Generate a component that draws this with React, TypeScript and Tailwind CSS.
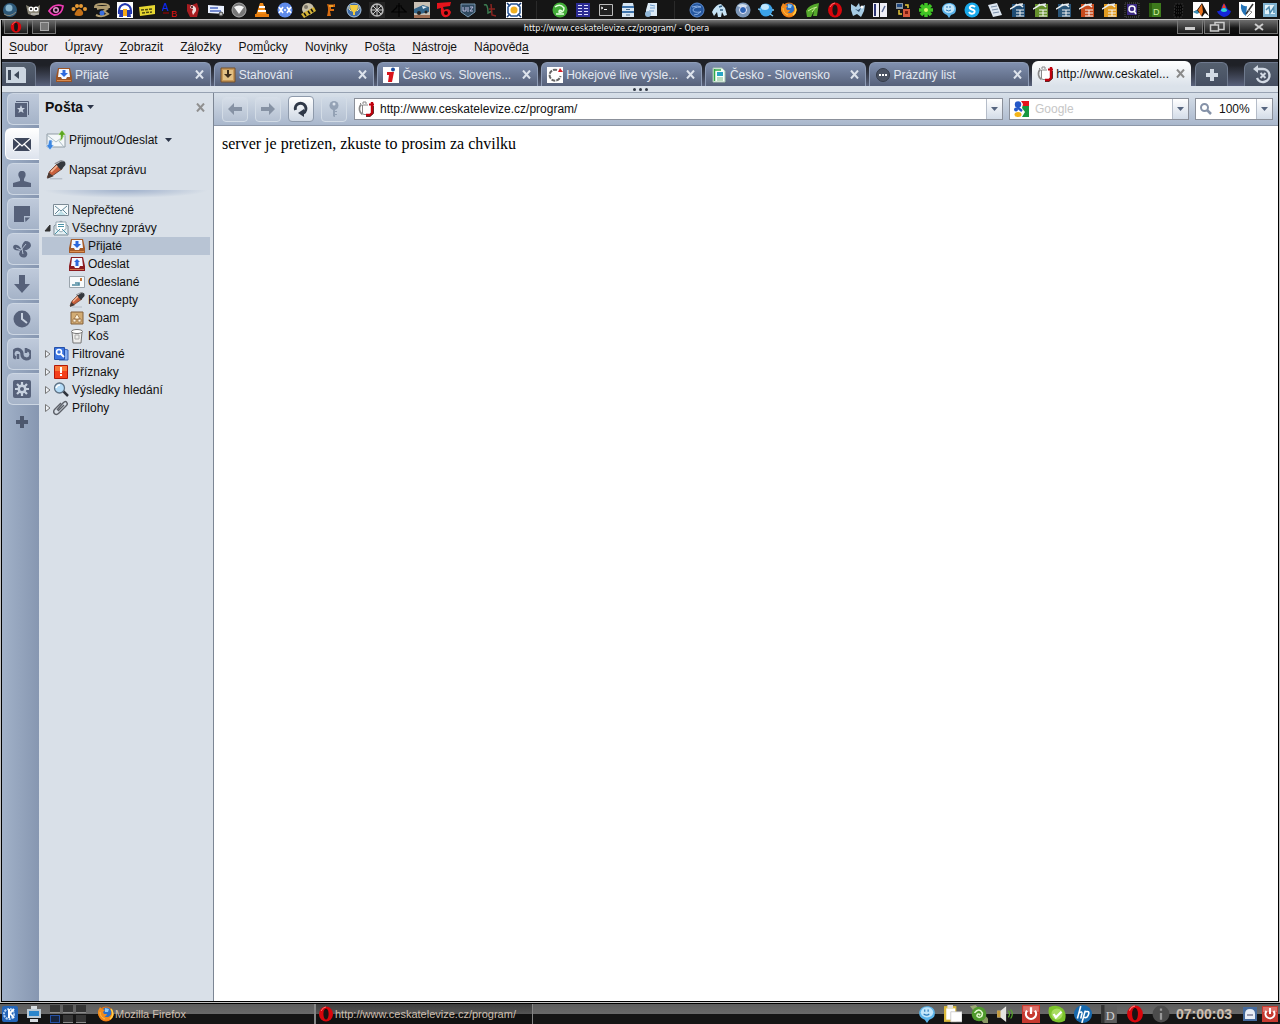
import React from 'react';

type IconProps = { children: React.ReactNode; size?: string; box?: string };

const Icon = ({ children, size = 'size-4', box = '0 0 16 16' }: IconProps) => (
  <svg className={`${size} shrink-0`} viewBox={box} fill="none" aria-hidden="true">
    {children}
  </svg>
);

/* ── Shared drawings ── */

const OperaO = () => (
  <>
    <ellipse cx="8" cy="8" rx="7" ry="7.5" fill="#d8060c" />
    <ellipse cx="8" cy="8" rx="2.6" ry="5.6" fill="#1a1414" />
    <path d="M3 5Q5 1 8 1" stroke="#ff7070" strokeWidth="1" />
  </>
);

const Firefox = () => (
  <>
    <circle cx="8" cy="8" r="7.5" fill="#e8720c" />
    <circle cx="8.5" cy="6.5" r="5" fill="#2b6fc4" />
    <path d="M7 2l4 1-1 3-3 0z" fill="#8cc8f4" />
    <path d="M0 5l2-4 2 2 3 1-2 2 1 2 3 0q-1 3-3 2 4 3 7-1l1-4 0-2q3 5 0 9-4 4-9 2-6-3-5-9z" fill="#f08a1c" />
    <path d="M13 3q4 6-1 10" stroke="#ffd24a" strokeWidth="1.4" />
    <path d="M2 6q0 5 5 7" stroke="#ffc040" strokeWidth="1" />
  </>
);

const Bubble = () => (
  <>
    <path d="M8 1c4 0 7 2 7 6s-2 5-5 6l-2 3-2-3c-3-1-5-3-5-6s3-6 7-6z" fill="#5cb4ea" />
    <ellipse cx="8" cy="6.5" rx="5.5" ry="4.5" fill="#c2e6fa" />
    <path d="M6 4v2M9 4v2M5 8q3 2 5 0" stroke="#2878b8" />
  </>
);

const Chameleon = () => (
  <>
    <path d="M0 1l5-1 11 12v4h-4z" fill="#a8b878" opacity=".8" />
    <circle cx="8" cy="8" r="6.5" fill="#4f9a2c" />
    <path d="M4 7q4-5 7 0 0 4-3 4-3-1-1-3 3 0 1 1" stroke="#e4f8d0" strokeWidth="1.4" />
  </>
);

const PowerRed = () => (
  <>
    <path d="M0 0h16v16H0z" fill="#c63a30" />
    <path d="M1 1h14v5H1z" fill="#dc7068" />
    <path d="M4.500 5a4.500 4.500 0 1 0 7 0M8 2v6" stroke="#fff" strokeWidth="2" />
  </>
);

const TvMark = () => (
  <>
    <path d="M4 4h9v9H5z" fill="#fff" />
    <path d="M10 4H4.500v8l1 1.500H8" stroke="#888" />
    <path d="M3.500 3.500Q1 5 1.500 9q.5 3 3 4.500" stroke="#888" strokeWidth="1.600" />
    <path d="M3 3l-1-1M5 3V1h3v2" stroke="#888" />
    <path d="M8 14h4l2-2V1" stroke="#c0000c" strokeWidth="2.400" />
    <path d="M11 3.500h5" stroke="#c0000c" strokeWidth="2" />
    <path d="M8 15.500h4l3.500-3V5" stroke="#400" strokeWidth=".8" />
  </>
);

const Tray = ({ frame, up }: { frame: string; up?: boolean }) => (
  <>
    <path d="M2 1h12l2 9v5H0v-5z" fill={frame} />
    <path d="M3 2h10l1 8h-3l-1 2H6l-1-2H2z" fill="#f4f8ff" />
    <path d={up ? 'M8 3l3 3H9.500v4h-3V6H5z' : 'M6.500 3h3v3H12L8 10 4 6h2.500z'} fill="#2c68dc" />
    <path d="M1 13.500h14" stroke="#ffb070" opacity=".6" />
  </>
);

const Crate = () => (
  <>
    <path d="M1 1h14v14H1z" fill="#c99a58" stroke="#76512a" />
    <path d="M3 3h10v10H3z" fill="#e2c084" />
    <path d="M7 3h2v4h3l-4 4-4-4h3z" fill="#3c2c1c" />
  </>
);

const Pen = () => (
  <>
    <path d="M3 15h10" stroke="#b4bcc6" />
    <path d="M1 14l2-5 6-6 4 4-7 5z" fill="#c9603c" stroke="#5a3020" strokeWidth=".6" />
    <path d="M8 4l4-3q4-1 3.500 3L12 8z" fill="#34383e" />
    <path d="M7 3l5-2.500 2 .5" stroke="#8c9096" />
    <path d="M1 15l1-5 4 3z" fill="#4a3a34" />
    <path d="M4 9.500l5-5" stroke="#f4b898" strokeWidth="1.300" />
  </>
);

const Office = ({ color }: { color: string }) => (
  <>
    <path d="M2 2h13v13H2z" fill={color} />
    <path d="M0 7q5-2 7-5M3 5q5-3 10-3M8 3q2-1 5 2" stroke="#e9edf0" strokeWidth="1.400" />
    <path d="M6 8h8M6 11h8M6 14h8M10 8v6" stroke="#f4f4f4" />
  </>
);

const Letter = () => (
  <>
    <path d="M.5 2.500h15v11H.5z" fill="#f5f9fb" stroke="#7c8b96" />
    <path d="M3 13l5-4 5 4z" fill="#bfe0e8" />
    <path d="M2 4l6 5 6-5M2 12l4-4M14 12l-4-4" stroke="#63889a" />
  </>
);

/* ── Launcher panel ── */

const LAUNCHERS: (React.ReactNode | null)[] = [
  <><circle cx="8" cy="8" r="7" fill="#2d5878" /><circle cx="7" cy="6" r="3.500" fill="#88b4cc" /><path d="M2 12q6 4 12-2" stroke="#8a8a80" /></>,
  <><path d="M1 3l4 2h7l3-2-1 9-5 2-6-2z" fill="#8b8778" /><circle cx="6" cy="7" r="2.500" fill="#fff" /><circle cx="11" cy="7" r="2.500" fill="#fff" /><circle cx="6" cy="7" r="1" fill="#000" /><circle cx="11" cy="7" r="1" fill="#000" /><path d="M6 12h8" stroke="#ddd" /></>,
  <><path d="M1 9q5-8 14-5-1 9-9 9-3-1-5-4z" fill="#1c0414" stroke="#f03cb4" strokeWidth="1.800" /><circle cx="8" cy="8" r="3" fill="#e494d0" /><circle cx="8" cy="8" r="1.500" fill="#111" /></>,
  <><path d="M4 11q4-8 8-1 1 4-4 4-6 0-4-3z" fill="#c47018" /><circle cx="2.500" cy="7" r="2" fill="#e89a34" /><circle cx="6" cy="4" r="2" fill="#e89a34" /><circle cx="10" cy="4" r="2" fill="#e89a34" /><circle cx="14" cy="7" r="2" fill="#e89a34" /></>,
  <><path d="M1 5q0-3 7-3t7 3H1zM3 7q5-2 10 0l-3 2 4 3q-6 4-12 1" stroke="#b09c70" strokeWidth="2" /><circle cx="8" cy="11" r="2.500" fill="#3c70e0" /></>,
  <><path d="M0 0h16v16H0z" fill="#fff" /><path d="M2 12q-1-9 6-10 7 1 6 10" stroke="#2438b0" strokeWidth="2" /><path d="M3 8h3v7H2zM10 8h3l1 7h-4z" fill="#2438b0" /><path d="M6 7h4v7H6z" fill="#f6a818" /></>,
  <><path d="M0 5l16-2v9L1 14z" fill="#e6d630" /><path d="M2 8l12-1M3 11l10-1" stroke="#4c4810" strokeWidth="1.500" strokeDasharray="3 1" /></>,
  <><text x="0" y="9" fontSize="10" fontFamily="Liberation Sans" fill="#0b2cff">A</text><text x="9" y="15" fontSize="9" fontFamily="Liberation Sans" fill="#e01010">B</text><path d="M1 11h6" stroke="#a00" /></>,
  <><path d="M2 2l5 1 5-2 2 6-2 8H5L2 9z" fill="#a81c20" /><path d="M6 3q6 1 5 6l-3 4-1-3 1-3-3-1z" fill="#f0dede" /><circle cx="7" cy="5" r="1" fill="#300" /></>,
  <><path d="M0 3l16 1v8L0 11z" fill="#eaf1ff" /><path d="M2 6h8M2 9h11" stroke="#4e68c0" strokeWidth="1.500" /><circle cx="13" cy="12" r="2" fill="#bbb" stroke="#444" /></>,
  <><circle cx="8" cy="8" r="7" fill="#777" stroke="#aaa" /><path d="M3 5q5-3 10 0l-5 7z" fill="#f4f4f4" /></>,
  <><path d="M6 1h3l4 12H2z" fill="#ee8a18" /><path d="M5 5h6M4 9h8" stroke="#fff" strokeWidth="1.800" /><path d="M1 12h14v3H1z" fill="#e67c0c" /></>,
  <><circle cx="8" cy="8" r="7.500" fill="#5f8bea" /><path d="M2 5l4 6M6 5l-4 6M7 8h2M14 5l-4 6M10 5l4 6" stroke="#fff" strokeWidth="1.600" /></>,
  <><circle cx="8" cy="7" r="6" fill="#c8c0a8" /><circle cx="6" cy="5" r="2" fill="#7c7668" /><path d="M1 12l13-7 2 4-12 7z" fill="#d6b434" /><path d="M4 11l2 3M8 9l2 3M11 7l2 3" stroke="#111" strokeWidth="1.500" /></>,
  <><path d="M4 14Q6 7 4 2q5 1 8 0v3H8v2h3v2H7l1 5z" fill="#d86c10" /><path d="M6 4h4" stroke="#ffd040" /></>,
  <><circle cx="8" cy="8" r="7" fill="#416da8" stroke="#a8c4e0" /><path d="M4 3h8q0 6-3 7v3H7v-3Q4 9 4 3z" fill="#f4cd40" /><path d="M3 4v3l2 2M13 4v3l-2 2" stroke="#f0e0a0" /></>,
  <><path d="M0 0h16v16H0z" fill="#242424" /><circle cx="8" cy="8" r="6" stroke="#b6b6b6" strokeWidth="1.500" /><path d="M8 2v12M2 8h12M4 4l8 8M12 4l-8 8" stroke="#ccc" /></>,
  <><path d="M8 1v14M5 4h6M1 10l5-5M15 10l-5-5M0 10h16" stroke="#020202" strokeWidth="1.200" /></>,
  <><path d="M0 0h16v16H0z" fill="#c8c0b4" /><path d="M0 7l9-4 6 2v5l-9 2-6-1z" fill="#33658a" /><path d="M8 4l5 1-4 2z" fill="#e4f0f8" /><circle cx="5" cy="11" r="2" fill="#222" /><circle cx="12" cy="10" r="1.500" fill="#222" /><path d="M0 13h16v3H0z" fill="#9a6a50" /></>,
  <><path d="M0 1l14-1-1 4-7 1 1 3q5-3 7 2-1 6-7 5-4-2-3-9L0 7z" fill="#e5141c" /><circle cx="9" cy="11" r="2" fill="#1a0000" /></>,
  <><path d="M1 2h14v8l-7 5-7-5z" fill="#304a60" stroke="#7898b0" /><path d="M3 5v4h3V5M8 5v5M10 5h3l-3 4h3" stroke="#bbd" /></>,
  <><path d="M1 3q4-2 4 8l4-2" stroke="#3c7a50" strokeWidth="1.500" /><path d="M8 2l1 11 4 1M6 7h6" stroke="#8a2420" strokeWidth="1.500" /></>,
  <><path d="M0 0h16v16H0z" fill="#fff" /><path d="M1 1l3 3M15 1l-3 3M1 15l3-3M15 15l-3-3" stroke="#173a74" strokeWidth="1.500" /><path d="M5 2h6l3 3v6l-3 3H5l-3-3V5z" stroke="#265494" strokeWidth="1.500" /><circle cx="8" cy="8" r="3.500" fill="#f0b020" /></>,
  null,
  <><circle cx="8" cy="8" r="7.500" fill="#42ac38" /><path d="M3 5q5-4 9 1 0 5-5 4 0-3 3-1M4 12h8" stroke="#e4ffe0" strokeWidth="1.500" /></>,
  <><path d="M1 1h14v14H1z" fill="#2c2c94" /><path d="M3 3.500h4M9 3.500h4M3 6.500h4M9 6.500h4M3 9.500h4M9 9.500h4M3 12.500h4M9 12.500h4" stroke="#e0e0ff" /></>,
  <><path d="M1.500 2.500h13v11h-13z" fill="#222" stroke="#bbb" /><path d="M3 5l2 1-2 1M6 7.500h3" stroke="#eee" /></>,
  <><path d="M3 1h10l1 4v10H2V5z" fill="#d7e6f4" /><path d="M2 5h12M2 10h12" stroke="#3f74ac" strokeWidth="1.800" /><path d="M6 7.500h4M6 13h4" stroke="#4a6888" /></>,
  <><path d="M5 1h9v13H3V8z" fill="#dceaf6" /><path d="M7 3l5 1M7 6h5M6 9h5" stroke="#6f9ccc" /><circle cx="5" cy="12" r="3" fill="#91b7d8" /></>,
  null,
  <><circle cx="8" cy="8" r="7" fill="#2658a0" stroke="#5a8ad0" /><path d="M3 5q6-2 9 0-8 0-8 3t8 2M5 13q5 0 7-4" stroke="#88aee4" /></>,
  <><path d="M0 10q4-8 9-8l4 4 2 7-3 1-2-4-1 5H6l-1-5-3 4z" fill="#c6e2f4" /><path d="M7 5l3-1M8 8l3 0" stroke="#2f5c80" strokeWidth="1.500" /></>,
  <><circle cx="8" cy="8" r="7.500" fill="#7b96b8" /><path d="M2 4q5-4 11 0L8 6z" fill="#d0deec" /><circle cx="8" cy="8" r="3.500" fill="#2c62b4" stroke="#eef" /></>,
  <><circle cx="8" cy="8" r="6.500" fill="#3ba2e8" /><ellipse cx="7" cy="5" rx="4" ry="3" fill="#c0e8ff" /><path d="M0 7l3 1M12 12l3 2M14 8h2" stroke="#79c6f4" strokeWidth="1.500" /></>,
  <Firefox />,
  <><path d="M2 9Q4 3 15 1l-2 13H9l1-5-3 6H3z" fill="#55a82c" /><path d="M4 9q4-3 9-4M8 10l4-5" stroke="#c8f090" /></>,
  <OperaO />,
  <><path d="M1 2l5 3 3-4 1 4 5-2-1 6-3 6-4-3-4 2-2-6z" fill="#a7cce4" /><path d="M5 7l3 1 3-2-2 4z" fill="#2a4a6a" /><circle cx="12" cy="5" r="1.500" fill="#fff" /></>,
  <><path d="M1 1h6v14H1zM8 1h7v14H8z" fill="#eeeef6" /><path d="M3 2v12" stroke="#2c3474" strokeWidth="2" /><path d="M10 10l3-6" stroke="#5a6a94" strokeWidth="1.500" /></>,
  <><path d="M1 1h7v6H1z" fill="#8a99a8" /><path d="M2 2h5v3H2z" fill="#204880" /><path d="M8 7h7v8H8z" fill="#d5583c" /><path d="M10 9h3v3h-3z" fill="#7a1c10" /><path d="M4 8v4h3M10 3h3v3" stroke="#e8c838" strokeWidth="1.500" /></>,
  <><path d="M8 1v14M1 8h14M3 3l10 10M13 3L3 13" stroke="#3fc424" strokeWidth="3.500" /><circle cx="8" cy="8" r="2" fill="#d8f870" /></>,
  <Bubble />,
  <><circle cx="8" cy="8" r="7.500" fill="#19a9ea" /><path d="M11 5q-2-2-4-1-3 2 1 3.500 4 1 2 3.500-3 2-5-1" stroke="#fff" strokeWidth="2" /></>,
  <><path d="M1 3l9-2 5 12-9 2z" fill="#dde6f0" /><path d="M4 5l6-1M5 8l6-1M6 11l6-1" stroke="#7a8ea8" /></>,
  <Office color="#1f4c74" />,
  <Office color="#65902c" />,
  <Office color="#2a5578" />,
  <Office color="#c84a1c" />,
  <Office color="#e09a20" />,
  <><path d="M1 1h14v14H1z" stroke="#555" strokeDasharray="1 1" /><path d="M3 2h10v11H3z" fill="#3c2a84" /><circle cx="8" cy="7" r="3" stroke="#fff" strokeWidth="1.500" /><path d="M10 9l2 3" stroke="#fff" strokeWidth="1.500" /></>,
  <><path d="M2 1h12v14H2z" fill="#3d7a1c" /><path d="M2 1h3v14H2z" fill="#2b5c10" /><text x="6" y="13" fontSize="9" fontFamily="Liberation Sans" fill="#d0f0a0">D</text></>,
  <><path d="M5 2h8l-1 13H4z" fill="#050505" stroke="#333" strokeDasharray="2 1" /><path d="M6 5h5M6 8h5M6 11h5" stroke="#3c3c3c" strokeDasharray="1 1" /></>,
  <><path d="M0 0h16v16H0z" fill="#fff" /><path d="M0 10l4-2 5-7 7 13-4-3-3 4-2-4z" fill="#17100c" /><path d="M5 8l4-6 1 8-2 4z" fill="#e8701c" /><path d="M0 10l4-2 2 3-2 1z" fill="#3c90b8" /></>,
  <><path d="M1 9q4 1 5-5 2-4 4 0 1 4 5 5-1 5-7 6-6-2-7-6z" fill="#1424d8" /><path d="M6 6l2-5 2 5z" fill="#f03c20" /><path d="M5 9q0-3 3-3t3 3q-3 2-6 0z" fill="#32d4d0" /></>,
  <><path d="M0 0h16v16H0z" fill="#fff" /><path d="M2 2q4 3 6 2l-1 10Q1 10 2 2z" fill="#2474b8" /><path d="M7 12l7-10" stroke="#333" strokeWidth="1.500" /><path d="M9 8l4 2-5 5" stroke="#888" /></>,
  <><path d="M1 1h14v14H1z" fill="#7fb2d0" /><path d="M3 3h10v9H3z" fill="#e3f3fa" /><path d="M4 8l3-3 1 6 4-6v6" stroke="#4a88ac" strokeWidth="1.500" /></>,
];

const LauncherPanel = () => (
  <div className="flex h-[19px] items-center justify-between bg-[#151515] px-0.5">
    {LAUNCHERS.map((icon, i) =>
      icon ? (
        <button key={i} aria-label={`Launcher ${i + 1}`} className="flex w-4 justify-center">
          <Icon>{icon}</Icon>
        </button>
      ) : (
        <span key={i} className="flex w-4 justify-center"><span className="h-[18px] w-px bg-[#2a2a2a]" /></span>
      )
    )}
  </div>
);

/* ── Window chrome ── */

const TITLE_BTN = 'flex h-[14px] items-center justify-center border border-t-0 border-[#777] bg-linear-to-b from-[#6d6d6d] to-[#1c1c1c]';

const TitleBar = () => (
  <div className="flex h-4 items-start bg-linear-to-b from-[#777] via-[#111] via-50% to-[#090909]">
    <div className="flex gap-1 pl-0.5">
      <button aria-label="Window menu" className={`${TITLE_BTN} w-6`}><Icon size="size-3"><OperaO /></Icon></button>
      <button aria-label="Pin" className={`${TITLE_BTN} w-6`}>
        <span className="size-[9px] border border-[#aaa] bg-[#777]" />
      </button>
    </div>
    <span className="flex-1 text-center text-[9px] leading-4 text-[#f2f2f2] [font-family:'DejaVu_Sans_Condensed','DejaVu_Sans',sans-serif]">
      http://www.ceskatelevize.cz/program/ - Opera
    </span>
    <div className="flex gap-px">
      <button aria-label="Minimize" className={`${TITLE_BTN} w-[26px]`}><span className="mt-1 h-[3px] w-2.5 bg-[#ccc]" /></button>
      <button aria-label="Restore" className={`${TITLE_BTN} w-[26px]`}>
        <Icon size="h-3 w-4" box="0 0 16 12">
          <path d="M6 1.500h9v7H6z" stroke="#ccc" strokeWidth="1.500" />
          <path d="M1.500 4h8v6h-8z" fill="#444" stroke="#ccc" strokeWidth="1.500" />
        </Icon>
      </button>
      <button aria-label="Close" className={`${TITLE_BTN} ml-2 w-[39px]`}>
        <Icon size="h-2 w-3" box="0 0 12 8"><path d="M2 1l8 6M10 1L2 7" stroke="#ccc" strokeWidth="2" /></Icon>
      </button>
    </div>
  </div>
);

const MENU = [
  ['', 'S', 'oubor'],
  ['Úp', 'r', 'avy'],
  ['', 'Z', 'obrazit'],
  ['Z', 'á', 'ložky'],
  ['Po', 'm', 'ůcky'],
  ['Nov', 'i', 'nky'],
  ['Poš', 't', 'a'],
  ['', 'N', 'ástroje'],
  ['Nápověd', 'a', ''],
];

const MenuBar = () => (
  <nav className="flex h-[23px] items-center gap-[17px] bg-[#efebef] px-[7px] pb-0.5 text-xs text-[#111]">
    {MENU.map(([before, key, after]) => (
      <button key={before + key + after}>{before}<u className="underline-offset-2">{key}</u>{after}</button>
    ))}
  </nav>
);

const TABS = [
  { title: 'Přijaté', icon: <Tray frame="#9c5424" /> },
  { title: 'Stahování', icon: <Crate /> },
  {
    title: 'Česko vs. Slovens...',
    icon: <><path d="M0 0h16v16H0z" fill="#fff" /><path d="M4 5h7L9 15H5l1-7H4z" fill="#d8141c" /><circle cx="10" cy="2.500" r="2" fill="#1c4c9c" /></>,
  },
  {
    title: 'Hokejové live výsle...',
    icon: <><path d="M0 0h16v16H0z" fill="#fff" /><path d="M10 3a5.500 5.500 0 1 0 3.500 6" stroke="#666" strokeWidth="2" strokeDasharray="4 1" /><path d="M13 1l3 4h-5z" fill="#d42028" /></>,
  },
  {
    title: 'Česko - Slovensko',
    icon: <><path d="M2 1h9l3 3v11H2z" fill="#f8fff8" stroke="#a4c4b0" /><path d="M3.500 2v12M4 3h6" stroke="#30a848" strokeWidth="1.500" /><path d="M6 5h6v4H6z" fill="#28a4c4" /><path d="M6 11h6M6 13h6" stroke="#78b888" /></>,
  },
  {
    title: 'Prázdný list',
    icon: <><circle cx="8" cy="8" r="6.500" fill="#4a5262" stroke="#353c4a" /><path d="M4 7h2v2H4zM7 7h2v2H7zM10 7h2v2h-2z" fill="#fff" /></>,
  },
];

const CloseX = ({ color }: { color: string }) => (
  <Icon size="size-[9px]" box="0 0 9 9"><path d="M1 .5l7 8M8 .5l-7 8" stroke={color} strokeWidth="2" /></Icon>
);

const SIDE_TAB = 'flex items-center justify-center rounded-t-md border border-b-0 border-[#6f7a8e] bg-linear-to-b from-[#55606f] to-[#454e61]';

const TabBar = () => (
  <div className="flex h-[26px] items-end bg-linear-to-b from-[#1f2127] from-20% to-[#59627c]">
    <button aria-label="Panels" className={`${SIDE_TAB} mr-3.5 h-6 w-[34px] justify-start rounded-tl-none border-l-0 pl-1`}>
      <Icon size="h-4 w-5" box="0 0 20 16">
        <path d="M0 0h18l2 2v14H0z" fill="#cbd5e0" />
        <path d="M2 3h3v10H2z" fill="#3c4758" /><path d="M13 4v8L8 8z" fill="#3c4758" />
      </Icon>
    </button>
    <div role="tablist" className="flex min-w-0 flex-1 items-end gap-[3px]">
      {TABS.map((tab) => (
        <div key={tab.title} className="flex h-6 min-w-0 flex-1 items-center rounded-t-md border border-b-0 border-[#8e9cb6] bg-linear-to-b from-[#8090af] to-[#56617a] pr-1.5 pl-[5px]">
          <button role="tab" className="flex min-w-0 flex-1 items-center gap-[3px] text-left text-xs whitespace-nowrap text-[#e4e9f1]">
            <Icon>{tab.icon}</Icon>{tab.title}
          </button>
          <button aria-label={`Zavřít ${tab.title}`}><CloseX color="#dde3ec" /></button>
        </div>
      ))}
      <div className="flex h-[25px] min-w-0 flex-1 items-center rounded-t-md bg-linear-to-b from-white to-[#dbe2ea] pr-1.5 pl-[5px]">
        <button role="tab" aria-selected="true" className="flex min-w-0 flex-1 items-center gap-[3px] text-left text-xs whitespace-nowrap text-[#111]">
          <Icon><TvMark /></Icon>http://www.ceskatel...
        </button>
        <button aria-label="Zavřít kartu"><CloseX color="#8a8a8a" /></button>
      </div>
    </div>
    <button aria-label="Nová karta" className={`${SIDE_TAB} ml-1 h-6 w-[33px]`}>
      <Icon size="size-3" box="0 0 12 12"><path d="M6 0v12M0 6h12" stroke="#d2dae4" strokeWidth="4" /></Icon>
    </button>
    <button aria-label="Zavřené karty" className={`${SIDE_TAB} ml-4 h-6 w-[34px] rounded-tr-none border-r-0`}>
      <Icon size="size-5" box="0 0 20 20">
        <path d="M5 4h6a6.500 6.500 0 1 1-6 9" stroke="#d2dae4" strokeWidth="2.400" />
        <path d="M6 0v8L1 4z" fill="#d2dae4" /><path d="M8.500 8l5 5M13.500 8l-5 5" stroke="#d2dae4" strokeWidth="2" />
      </Icon>
    </button>
  </div>
);

/* ── Panel selector ── */

const INK = '#56617a';

const PANELS = [
  { name: 'Záložky', icon: <><path d="M2 3h12v14H2z" fill={INK} /><path d="M3 1.500h12.500V15" stroke={INK} /><path d="M8 5l1.200 3H12l-2.200 2 .8 3L8 11.500 5.400 13l.8-3L4 8h2.800z" fill="#c8d2e0" /></> },
  { name: 'Pošta', active: true, icon: <><path d="M0 3h18v13H0z" fill="#3e475c" /><path d="M0 3l9 8 9-8M0 16l7-7M18 16l-7-7" stroke="#fff" strokeWidth="1.300" /></> },
  { name: 'Kontakty', icon: <path d="M9 1c3 0 4 2 3.500 5L11 9v2l7 2v4H0v-4l7-2V9L5.500 6C5 3 6 1 9 1z" fill={INK} /> },
  { name: 'Poznámky', icon: <><path d="M1 1h16v10h-6v6H1z" fill={INK} /><path d="M12 12.500h5L12.500 17z" fill={INK} /></> },
  { name: 'Unite', icon: <><path d="M9 10q-1-6 3-9 6 0 6 5-2 5-9 4z" fill={INK} /><path d="M9 10Q1 12 0 7q1-4 6-1z" fill={INK} /><path d="M9 9q8 3 4 8-5 2-7-3 0-3 3-5z" fill={INK} /><path d="M8 10l5-6M8 10L3 8M9 9l1 5" stroke="#b4c0d2" /></> },
  { name: 'Stahování', icon: <path d="M6 0h6v9h5l-8 9-8-9h5z" fill={INK} /> },
  { name: 'Historie', icon: <><circle cx="9" cy="9" r="8.500" fill={INK} /><path d="M9 3v6l5 4" stroke="#c8d2e0" strokeWidth="2" /></> },
  { name: 'Odkazy', icon: <><path d="M3 13a4.500 4.500 0 1 1 6-4 4.500 4.500 0 1 0 5-4" stroke={INK} strokeWidth="3.200" /><path d="M5 9v5M13 3v5" stroke={INK} strokeWidth="2.500" /></> },
  { name: 'Widgety', icon: <><rect width="18" height="18" rx="2" fill={INK} /><path d="M9 2v14M2 9h14M4 4l10 10M14 4L4 14" stroke="#c8d2e0" strokeWidth="2.200" /><circle cx="9" cy="9" r="4.500" fill="#c8d2e0" /><circle cx="9" cy="9" r="2" fill={INK} /></> },
];

const PanelSelector = () => (
  <div className="flex w-[37px] shrink-0 flex-col items-end gap-[3px] bg-linear-to-r from-[#a1b1c8] to-[#8797b1]">
    {PANELS.map((p) => (
      <button
        key={p.name}
        aria-label={p.name}
        className={p.active
          ? 'flex h-8 w-[34px] items-center justify-center rounded-l-md border border-r-0 border-white bg-linear-to-b from-white to-[#dde3ed] pr-0.5'
          : 'flex h-8 w-8 items-center justify-center rounded-l-md border border-r-0 border-[#ccd6e3] bg-linear-to-b from-[#bfcadb] to-[#a5b3c8] pr-[3px]'}
      >
        <Icon size="size-[18px]" box="0 0 18 18">{p.icon}</Icon>
      </button>
    ))}
    <button aria-label="Přidat panel" className="flex h-7 w-8 items-center justify-center pr-0.5">
      <Icon size="size-3" box="0 0 12 12"><path d="M6 0v12M0 6h12" stroke="#4d586e" strokeWidth="4" /></Icon>
    </button>
  </div>
);

/* ── Mail panel ── */

type Folder = { label: string; level: number; icon: React.ReactNode; open?: boolean; selected?: boolean; leaf?: boolean };

const FOLDERS: Folder[] = [
  { label: 'Nepřečtené', level: 0, leaf: true, icon: <Letter /> },
  { label: 'Všechny zprávy', level: 0, open: true, icon: <><path d="M1 6l7-5 7 5v9H1z" fill="#e4f0f4" stroke="#7c8b96" /><path d="M3 2h10v7l-5 3-5-3z" fill="#fff" stroke="#98aab4" /><path d="M5 4.500h6M5 6.500h6M2 14l5-5M14 14L9 9" stroke="#4b93a8" /></> },
  { label: 'Přijaté', level: 1, selected: true, icon: <Tray frame="#a45a28" /> },
  { label: 'Odeslat', level: 1, icon: <Tray frame="#8c1c20" up /> },
  { label: 'Odeslané', level: 1, icon: <><path d="M.5 2.500h15v11H.5z" fill="#f8fbfc" stroke="#9aa4ac" /><path d="M11 4h2v3h-2z" fill="#c4783c" /><path d="M3 11h7v-2H6" stroke="#4d8aa0" strokeWidth="1.600" /></> },
  { label: 'Koncepty', level: 1, icon: <Pen /> },
  { label: 'Spam', level: 1, icon: <><path d="M2 2h12v12H2z" fill="#d2ac74" stroke="#84613a" /><path d="M8 4l3 5H5zM4 9h3v3H4zM9 9h3v3H9z" fill="#fff4dc" stroke="#94683c" strokeWidth=".7" /></> },
  { label: 'Koš', level: 1, icon: <><path d="M3 4h10l-1 11H4z" fill="#eeeeec" stroke="#777" /><ellipse cx="8" cy="3.500" rx="5.500" ry="2" fill="#fff" stroke="#777" /><path d="M6 7h4v4H6z" stroke="#aaa" /></> },
  { label: 'Filtrované', level: 0, icon: <><path d="M11 3l4 1v10H6" fill="#85aef0" stroke="#3560b8" /><path d="M1.500 1.500h10v12h-10z" fill="#3b74e0" stroke="#2450a8" /><circle cx="6" cy="6" r="2.500" stroke="#fff" strokeWidth="1.500" /><path d="M8 8l3 3" stroke="#fff" strokeWidth="1.800" /></> },
  { label: 'Příznaky', level: 0, icon: <><path d="M1.500 1.500h13v13h-13z" fill="#f4401c" stroke="#b41808" /><path d="M2 2h12v5H2z" fill="#f87838" /><path d="M7 3h2v6H7zM7 10h2v2H7z" fill="#fff" /></> },
  { label: 'Výsledky hledání', level: 0, icon: <><path d="M10 9l5 5" stroke="#30343c" strokeWidth="2.500" /><circle cx="6.500" cy="6" r="5" fill="#b4dcf8" stroke="#5f7284" strokeWidth="1.300" /><path d="M3 6q1-3 4-3" stroke="#fff" strokeWidth="1.500" /></> },
  { label: 'Přílohy', level: 0, icon: <path d="M4 10l6-7q3-3 4 0 1 1-1 3l-7 7q-3 3-5 0-1-2 1-4l6-6M5 11l6-6" stroke="#5c6068" strokeWidth="1.400" /> },
];

const Caret = ({ color = '#2c3548' }: { color?: string }) => (
  <Icon size="h-1 w-[7px]" box="0 0 7 4"><path d="M0 0h7L3.500 4z" fill={color} /></Icon>
);

const MailPanel = () => (
  <aside className="w-[174px] shrink-0 bg-[#d9e0e8] text-xs text-[#111]">
    <div className="flex h-7 items-center justify-between pr-2 pl-1.5">
      <button className="flex items-center gap-1 text-sm font-bold">Pošta <Caret /></button>
      <button aria-label="Zavřít panel"><CloseX color="#909090" /></button>
    </div>
    <div className="mt-1 px-[7px]">
      <button className="flex h-[30px] items-center gap-[3px]">
        <Icon size="size-5" box="0 0 20 20">
          <path d="M1 4h18v13H1z" fill="#f4f8fa" stroke="#909ca4" />
          <path d="M1 5l9 7 9-7M2 17l5-6M18 17l-5-6" stroke="#a9bac4" />
          <path d="M16 0l4 5h-2.500q0 5-4 6 2-3 1-6H12z" fill="#5ba620" stroke="#e4f4d8" strokeWidth=".6" />
          <path d="M3 10h3v5h2l-4 5-4-5h2z" fill="#3c86e0" stroke="#e0eefc" strokeWidth=".6" />
        </Icon>
        Přijmout/Odeslat
        <span className="ml-1"><Caret /></span>
      </button>
      <button className="flex h-[30px] items-center gap-[3px]"><Icon size="size-5"><Pen /></Icon>Napsat zprávu</button>
    </div>
    <div className="mx-1 mt-[5px] h-2 bg-[radial-gradient(ellipse_at_top,#9fb0cb_0%,#d9e0e8_70%)]" />
    <ul className="mx-[3px] mt-[3px]">
      {FOLDERS.map((f) => (
        <li key={f.label} className={`flex h-[18px] items-center ${f.selected ? 'bg-[#b8c4d4]' : ''} ${f.level ? 'pl-[27px]' : ''}`}>
          {f.level === 0 && (
            <span className="flex w-[11px] items-center pl-0.5">
              {!f.leaf && (
                <button aria-label={`Rozbalit ${f.label}`} aria-expanded={!!f.open}>
                  <Icon size="h-2 w-[7px]" box="0 0 7 8">
                    {f.open ? <path d="M6 1v6H1z" fill="#333" stroke="#333" /> : <path d="M1.500 .5v7L6 4z" fill="#eef2f6" stroke="#777" />}
                  </Icon>
                </button>
              )}
            </span>
          )}
          <button className="flex items-center gap-[3px]"><Icon>{f.icon}</Icon>{f.label}</button>
        </li>
      ))}
    </ul>
  </aside>
);

/* ── Address bar ── */

const NAV_BTN = 'flex size-[26px] shrink-0 items-center justify-center rounded border bg-linear-to-b';
const FIELD = 'flex h-[22px] items-center border border-[#8b909a] bg-white';
const DROP = 'flex h-full w-4 shrink-0 items-center justify-center border-l border-[#b5bdc9] bg-linear-to-b from-white to-[#d3dce8]';

const AddressBar = () => (
  <div className="flex h-[33px] items-center border-b border-[#8c97a8] bg-linear-to-b from-[#d8e0e9] to-[#a9b7cc] pr-[5px] pl-2">
    <div className="flex gap-[7px]">
      <button aria-label="Zpět" className={`${NAV_BTN} border-[#d3dce6] from-[#d7dfe9] to-[#b5c1d2]`}>
        <Icon><path d="M7 2v4h8v4H7v4L1 8z" fill="#8692a4" /></Icon>
      </button>
      <button aria-label="Vpřed" className={`${NAV_BTN} border-[#d3dce6] from-[#d7dfe9] to-[#b5c1d2]`}>
        <Icon><path d="M9 2v4H1v4h8v4l6-6z" fill="#8692a4" /></Icon>
      </button>
      <button aria-label="Obnovit" className={`${NAV_BTN} border-[#8e9aab] from-white to-[#cfd8e4]`}>
        <Icon><path d="M2.500 9a5.300 5.300 0 1 1 8 3" stroke="#2f3848" strokeWidth="3" /><path d="M5 12l6-4v8z" fill="#2f3848" /></Icon>
      </button>
      <button aria-label="Heslo" className={`${NAV_BTN} border-[#d3dce6] from-[#d0dae6] to-[#b5c1d2]`}>
        <Icon>
          <path d="M7 7h2v9H8l-1-1z" fill="#94a2b5" /><path d="M9 10h2v1H9zM9 13h2v1H9z" fill="#94a2b5" />
          <circle cx="8" cy="4.500" r="4.500" fill="#94a2b5" /><circle cx="8" cy="3" r="1.500" fill="#dbe3ec" />
        </Icon>
      </button>
    </div>
    <div className={`${FIELD} ml-[7px] min-w-0 flex-1 pl-[3px]`}>
      <Icon><TvMark /></Icon>
      <input aria-label="Adresa" defaultValue="http://www.ceskatelevize.cz/program/" className="min-w-0 flex-1 pl-1.5 text-xs text-[#111] outline-none" />
      <button aria-label="Seznam adres" className={DROP}><Caret color="#56657f" /></button>
    </div>
    <div className={`${FIELD} ml-1.5 w-[180px] pl-[3px]`}>
      <Icon>
        <path d="M8 0h8v5H8z" fill="#e8141c" /><path d="M8 5h8v11H8z" fill="#189840" />
        <path d="M0 0h8l2 3-1 4 3 4-3 5H0z" fill="#fff" />
        <circle cx="5" cy="3.500" r="3.200" fill="#2458c8" /><circle cx="3" cy="8.500" r="2" fill="#2458c8" /><path d="M4 6l5 4" stroke="#2458c8" strokeWidth="2.500" />
        <ellipse cx="5" cy="13.500" rx="3.500" ry="2.500" fill="#f4b418" />
      </Icon>
      <input aria-label="Hledat" placeholder="Google" className="min-w-0 flex-1 pl-1.5 text-xs outline-none placeholder:text-[#c6c6c6]" />
      <button aria-label="Vyhledávače" className={DROP}><Caret color="#56657f" /></button>
    </div>
    <div className={`${FIELD} ml-1.5 w-[78px] pl-1`}>
      <Icon size="size-3" box="0 0 12 12"><circle cx="4.500" cy="4.500" r="3.500" stroke="#8592a8" strokeWidth="2" /><path d="M7 7l4 4" stroke="#8592a8" strokeWidth="2.500" /></Icon>
      <input aria-label="Lupa" defaultValue="100%" className="min-w-0 flex-1 pl-[7px] text-xs text-[#111] outline-none" />
      <button aria-label="Úrovně lupy" className={DROP}><Caret color="#56657f" /></button>
    </div>
  </div>
);

/* ── Taskbar ── */

const TRAY = [
  { name: 'Kopete', icon: <Bubble /> },
  { name: 'Klipper', icon: <><path d="M0 1h11v14H0z" fill="#d9b93c" /><path d="M2 3h8v10H2z" fill="#fff" /><path d="M6 6h10v9H6z" fill="#fff" stroke="#bbb" strokeWidth=".6" /><path d="M3 0h5v3H3z" fill="#ddd" /></> },
  { name: 'YaST', icon: <Chameleon /> },
  { name: 'Zvuk', icon: <><path d="M1 5h3l5-4v14l-5-4H1z" fill="#e4e4e0" /><path d="M1 5h3v6H1z" fill="#c49a3c" /><path d="M11 5q2 3 0 6M13 4q3 4 0 8" stroke="#54a828" /></> },
  { name: 'Konec', icon: <PowerRed /> },
  { name: 'Skype', icon: <><path d="M1 2q7-3 12 1 4 4 2 11-5 3-11 0Q-1 9 1 2z" fill="#7cc42c" /><circle cx="8" cy="8" r="5" fill="#a8dc60" /><path d="M5 8l2 3 5-5" stroke="#fff" strokeWidth="2" /></> },
  { name: 'HP', icon: <><circle cx="8" cy="8" r="8" fill="#1768ac" /><path d="M6 1L3 12M4.500 7q3-2 2.500 1L6 12M10 5L7 16M10 6q4-1 3 2-1 4-4 3" stroke="#fff" strokeWidth="1.400" /></> },
  { name: 'Slovník', icon: <><path d="M1 0h14v16H1z" fill="#5c5c5c" /><path d="M1 0h3v16H1z" fill="#333" /><text x="5" y="13" fontSize="11" fontFamily="Liberation Serif" fill="#d0d0d0">D</text></> },
  { name: 'Opera', icon: <OperaO /> },
  { name: 'Informace', icon: <><circle cx="8" cy="8" r="7.500" fill="#4c4c4c" /><path d="M7 7h2v6H7zM7 3h2v2H7z" fill="#999" /></> },
];

const Taskbar = () => (
  <footer className="flex h-5 items-center bg-linear-to-b from-[#5c5c5c] via-[#6a6a6a] via-50% to-[#151515] to-50% text-[11px] text-[#cdbfb0]">
    <button aria-label="KDE" className="ml-0.5 flex">
      <Icon><rect width="16" height="16" rx="2" fill="#2465b8" /><circle cx="7" cy="8" r="5" stroke="#b6d4f4" strokeWidth="2" strokeDasharray="2 1" /><path d="M7 3v9M12 3L8 7l4 5" stroke="#fff" strokeWidth="2" /></Icon>
    </button>
    <button aria-label="Plocha" className="ml-2 flex">
      <Icon><path d="M1 3h14v9H1z" fill="#bccad4" /><path d="M3 5h10v5H3z" fill="#2b86cc" /><path d="M5 0h6v3H5zM4 13h8v3H4z" fill="#d5dbe0" /></Icon>
    </button>
    <div className="ml-2 grid grid-cols-3 gap-x-[3px] gap-y-0.5">
      {[0, 1, 2, 3, 4, 5].map((n) => (
        <button
          key={n}
          aria-label={`Plocha ${n + 1}`}
          className={n === 3
            ? 'h-2 w-2.5 border border-[#2450a4] bg-[#16233c]'
            : 'h-2 w-2.5 border-b border-[#8a8a8a] bg-[#353535]'}
        />
      ))}
    </div>
    <button className="ml-2.5 flex h-full w-[219px] items-center gap-px border-r border-[#858585] pl-0.5"><Icon><Firefox /></Icon>Mozilla Firefox</button>
    <button className="flex h-full w-[218px] items-center gap-px border-x border-[#858585] bg-linear-to-b from-[#3c3c3c] via-[#555] via-50% to-[#111] to-50% pl-0.5 whitespace-nowrap">
      <Icon><OperaO /></Icon>http://www.ceskatelevize.cz/program/
    </button>
    <div className="ml-auto flex items-center gap-2">
      {TRAY.map((t) => (
        <button key={t.name} aria-label={t.name} className="flex"><Icon size="size-[18px]">{t.icon}</Icon></button>
      ))}
    </div>
    <time className="ml-1.5 text-sm leading-5 font-bold">07:00:03</time>
    <button aria-label="Zamknout" className="ml-2.5 flex">
      <Icon><path d="M1 1h14v14H1z" fill="#456b9e" /><path d="M3 8q0-5 5-5t5 5v5H3z" fill="#e8eef6" /><path d="M5 9h6" stroke="#446" /></Icon>
    </button>
    <button aria-label="Odhlásit" className="mr-0.5 ml-1 flex"><Icon size="size-4"><PowerRed /></Icon></button>
  </footer>
);

export default function App() {
  return (
    <div className="flex min-h-screen flex-col bg-black [font-family:'Liberation_Sans',Arial,sans-serif]">
      <LauncherPanel />
      <div className="flex flex-1 flex-col border border-[#c4c4c4]">
        <div className="flex flex-1 flex-col border-x border-b border-black">
          <TitleBar />
          <MenuBar />
          <div className="h-px bg-[#1f2127]" />
          <TabBar />
          <div className="flex h-1.5 items-center justify-center gap-[3px] bg-[#dbe2ea]">
            <span className="size-[3px] rounded-full bg-[#333b48]" />
            <span className="size-[3px] rounded-full bg-[#333b48]" />
            <span className="size-[3px] rounded-full bg-[#333b48]" />
          </div>
          <div className="flex flex-1 border-t border-[#97a2b2]">
            <PanelSelector />
            <MailPanel />
            <main className="flex min-w-0 flex-1 flex-col border-l border-[#7c8694] bg-white">
              <AddressBar />
              <p className="p-2 text-base leading-5 text-black [font-family:'Liberation_Serif','Times_New_Roman',serif]">
                server je pretizen, zkuste to prosim za chvilku
              </p>
            </main>
          </div>
        </div>
      </div>
      <div className="h-px bg-black" />
      <Taskbar />
    </div>
  );
}
